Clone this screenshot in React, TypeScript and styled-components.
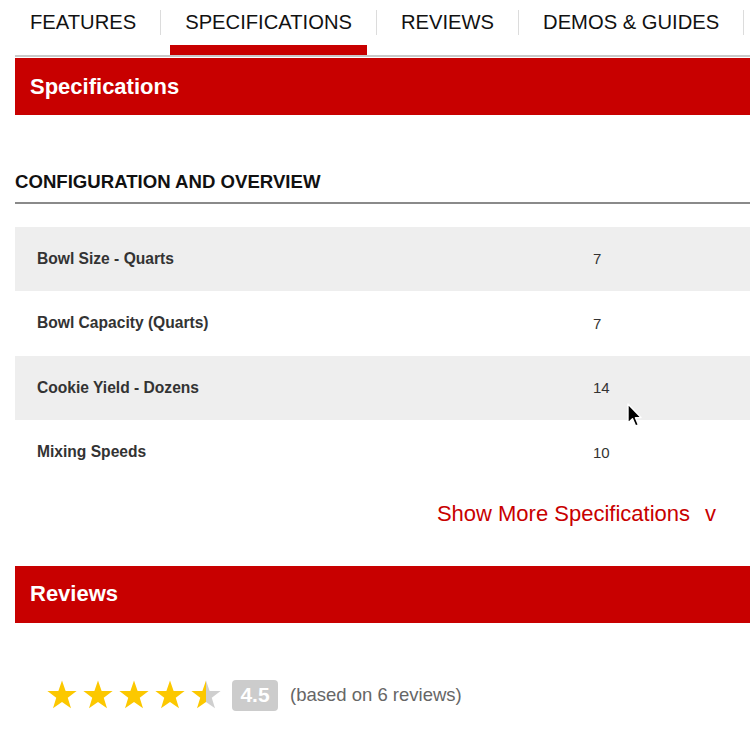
import React from "react";
import styled, { createGlobalStyle } from "styled-components";

const GlobalStyle = createGlobalStyle`
  html, body {
    margin: 0;
    padding: 0;
    background: #ffffff;
    overflow: hidden;
  }
  body {
    font-family: "Liberation Sans", Arial, Helvetica, sans-serif;
    color: #222;
  }
`;

const Page = styled.div`
  position: relative;
  width: 750px;
  height: 734px;
  overflow: hidden;
  padding-left: 15px;
  box-sizing: border-box;
`;

const TabBar = styled.nav`
  display: flex;
  align-items: stretch;
  height: 55px;
  border-bottom: 2px solid #c9c9c9;
  margin-bottom: 1px;
  width: 780px;
`;

const Tab = styled.div`
  display: flex;
  flex-direction: column;
  padding: 12px 24px 0;
  font-size: 20.2px;
  line-height: 20px;
  color: #111;
  text-transform: uppercase;
  white-space: nowrap;
  &:first-child {
    padding-left: 15px;
  }
`;

const ActiveBar = styled.div`
  margin: auto -15px 0;
  height: 10px;
  background: #c80000;
`;

const TabSeparator = styled.div`
  width: 1px;
  height: 25px;
  margin-top: 10px;
  background: #dcdcdc;
  flex: none;
`;

const Banner = styled.h2`
  margin: 0;
  height: 57px;
  display: flex;
  align-items: center;
  padding-left: 15px;
  background: #c80000;
  color: #ffffff;
  font-size: 22px;
  font-weight: 700;
  width: 760px;
  box-sizing: border-box;
`;

const SectionHeading = styled.h3`
  margin: 58px 0 0;
  padding-bottom: 10px;
  font-size: 18.6px;
  line-height: 18.5px;
  font-weight: 700;
  color: #111;
  border-bottom: 2px solid #8a8a8a;
  width: 760px;
`;

const SpecTable = styled.div`
  margin-top: 23px;
  width: 760px;
  display: flex;
  flex-direction: column;
`;

const SpecRow = styled.div<{ $shaded: boolean }>`
  display: grid;
  grid-template-columns: 556px 1fr;
  align-items: center;
  height: 64.5px;
  padding-left: 22px;
  background: ${(p) => (p.$shaded ? "#eeeeee" : "#ffffff")};
`;

const SpecLabel = styled.div`
  font-size: 15.6px;
  font-weight: 700;
  color: #333;
`;

const SpecValue = styled.div`
  font-size: 15px;
  color: #333;
`;

const ShowMore = styled.div`
  margin-top: 18px;
  display: flex;
  justify-content: flex-end;
  padding-right: 34px;
  width: 735px;
  box-sizing: border-box;
  font-size: 22px;
  line-height: 22px;
  color: #c80000;
`;

const Chevron = styled.span`
  margin-left: 15px;
`;

const ReviewsBanner = styled(Banner)`
  margin-top: 41px;
`;

const RatingRow = styled.div`
  display: flex;
  align-items: center;
  margin-top: 57px;
  padding-left: 32px;
`;

const Stars = styled.div`
  display: flex;
  gap: 6px;
`;

const Badge = styled.div`
  margin-left: 11px;
  width: 46px;
  height: 31px;
  border-radius: 4px;
  background: #cccccc;
  color: #ffffff;
  font-size: 21px;
  font-weight: 700;
  display: flex;
  align-items: center;
  justify-content: center;
`;

const ReviewCount = styled.span`
  margin-left: 12px;
  font-size: 18.5px;
  color: #666;
`;

const Cursor = styled.svg`
  position: absolute;
  left: 626px;
  top: 403px;
`;

const STAR =
  "12,0.3 14.9,8.7 23.7,8.8 16.6,14.1 19.2,22.6 12,17.5 4.8,22.6 7.4,14.1 0.3,8.8 9.1,8.7";

function Star({ fill }: { fill: "full" | "half" }) {
  return (
    <svg width="30" height="30" viewBox="0 0 24 24">
      <defs>
        <linearGradient id="halfStar" x1="0" x2="1" y1="0" y2="0">
          <stop offset="50%" stopColor="#fcc800" />
          <stop offset="50%" stopColor="#cfcfcf" />
        </linearGradient>
      </defs>
      <polygon points={STAR} fill={fill === "full" ? "#fcc800" : "url(#halfStar)"} />
    </svg>
  );
}

const specs = [
  { label: "Bowl Size - Quarts", value: "7" },
  { label: "Bowl Capacity (Quarts)", value: "7" },
  { label: "Cookie Yield - Dozens", value: "14" },
  { label: "Mixing Speeds", value: "10" },
];

const tabs = ["Features", "Specifications", "Reviews", "Demos & Guides"];

export default function App() {
  return (
    <>
      <GlobalStyle />
      <Page>
        <TabBar>
          {tabs.map((t, i) => (
            <React.Fragment key={t}>
              {i > 0 && <TabSeparator />}
              <Tab>
                <span>{t}</span>
                {i === 1 && <ActiveBar />}
              </Tab>
            </React.Fragment>
          ))}
          <TabSeparator />
        </TabBar>

        <Banner>Specifications</Banner>

        <SectionHeading>CONFIGURATION AND OVERVIEW</SectionHeading>

        <SpecTable>
          {specs.map((s, i) => (
            <SpecRow key={s.label} $shaded={i % 2 === 0}>
              <SpecLabel>{s.label}</SpecLabel>
              <SpecValue>{s.value}</SpecValue>
            </SpecRow>
          ))}
        </SpecTable>

        <ShowMore>
          Show More Specifications<Chevron>v</Chevron>
        </ShowMore>

        <ReviewsBanner>Reviews</ReviewsBanner>

        <RatingRow>
          <Stars>
            <Star fill="full" />
            <Star fill="full" />
            <Star fill="full" />
            <Star fill="full" />
            <Star fill="half" />
          </Stars>
          <Badge>4.5</Badge>
          <ReviewCount>(based on 6 reviews)</ReviewCount>
        </RatingRow>

        <Cursor width="16" height="26" viewBox="0 0 16 26">
          <path
            d="M2 1 L2 20 L6.5 15.8 L9.6 23 L12.4 21.8 L9.4 14.8 L15 14.6 Z"
            fill="#000"
            stroke="#fff"
            strokeWidth="1.4"
            strokeLinejoin="round"
          />
        </Cursor>
      </Page>
    </>
  );
}
